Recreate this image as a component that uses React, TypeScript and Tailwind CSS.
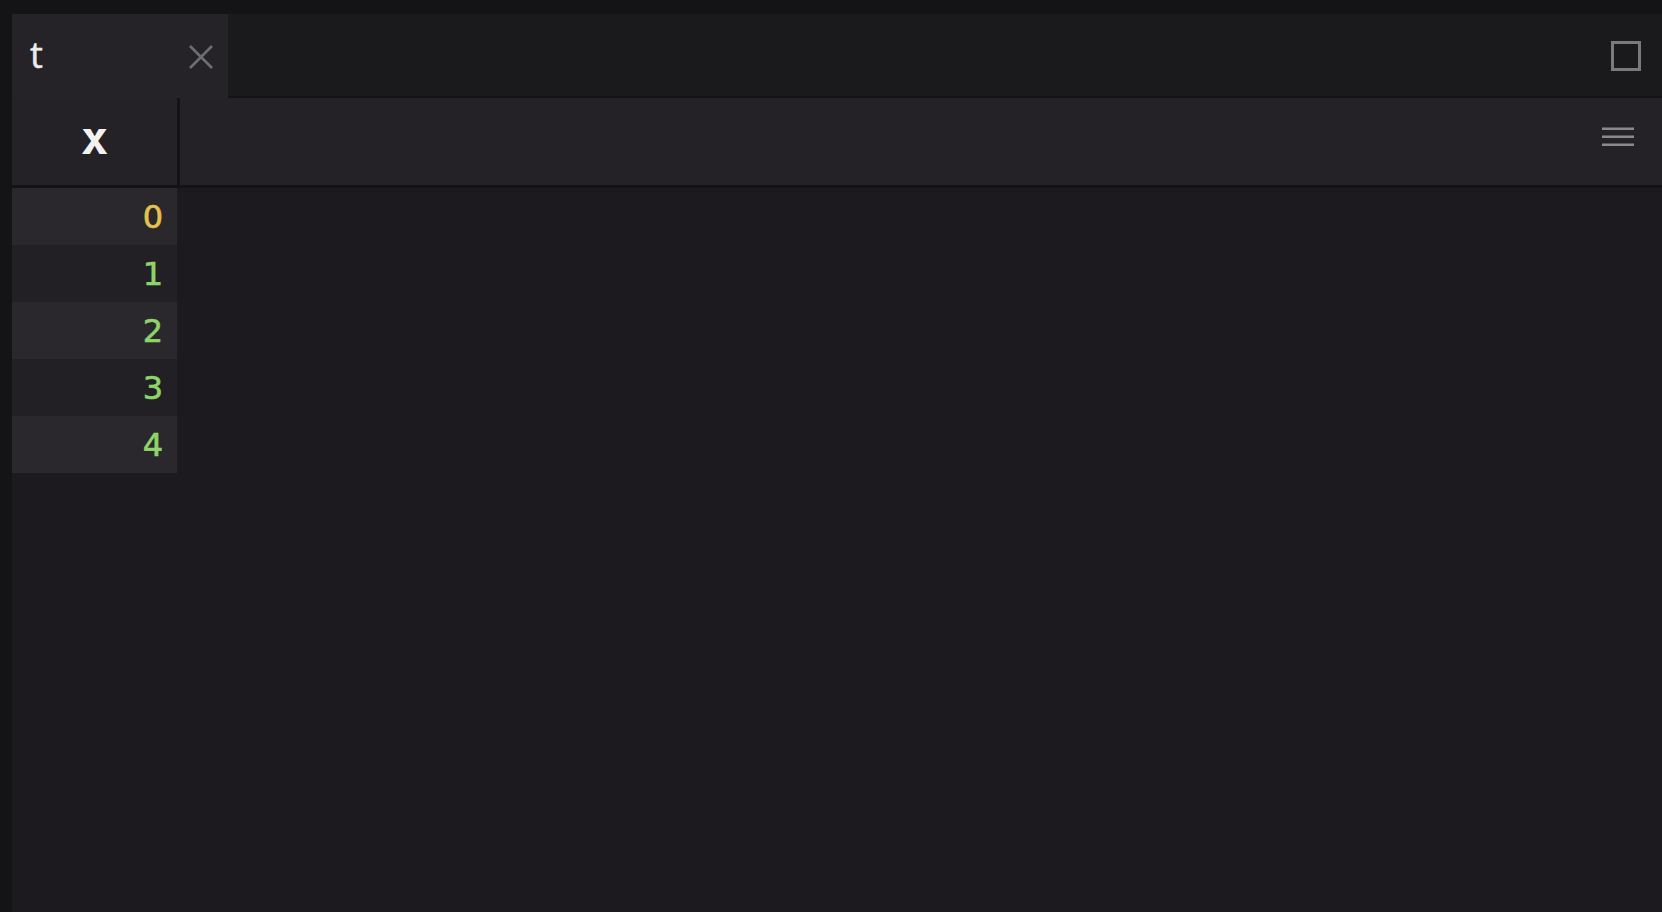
import React from "react";

const rows = [0, 1, 2, 3, 4];

export default function App() {
  return (
    <div className="w-[1662px] h-[912px] bg-[#141316] pl-[12px] pt-[14px] flex flex-col overflow-hidden">
      {/* tab bar */}
      <div className="h-[84px] flex bg-[#1a191c]">
        <div className="w-[216px] h-full bg-[#252327] flex items-center justify-between pl-[18px] pr-[14px]">
          <span
            className="text-[36px] leading-none text-[#ececec] -mt-[2px] [-webkit-text-stroke:0.5px]"
            style={{ fontFamily: '"Open Sans", "Noto Sans", sans-serif' }}
          >
            t
          </span>
          <svg width="26" height="26" viewBox="0 0 26 26" className="mt-[1px]">
            <path d="M2 2 L24 24 M24 2 L2 24" stroke="#6e6e70" strokeWidth="2.6" />
          </svg>
        </div>
        <div className="flex-1 h-full border-b-[2px] border-[#131215] flex items-center justify-end pr-[21px]">
          <div className="w-[30px] h-[30px] border-[3px] border-[#7a7a7c] mt-[2px]" />
        </div>
      </div>

      {/* header row */}
      <div className="h-[90px] flex bg-[#242226] border-b-[3px] border-[#131215]">
        <div className="w-[165px] h-full flex items-center justify-center">
          <span
            className="text-[46px] leading-none font-bold text-[#f2f2f2] -mt-[8px]"
            style={{ fontFamily: '"DejaVu Sans Mono", monospace' }}
          >
            x
          </span>
        </div>
        <div className="w-[3px] h-full bg-[#131215]" />
        <div className="flex-1 h-full" />
        <div className="w-[90px] h-full flex items-center justify-end pr-[28px]">
          <svg width="32" height="20" viewBox="0 0 32 20" className="-mt-[9px]">
            <rect x="0" y="0.5" width="32" height="2.5" fill="#8a8a8c" />
            <rect x="0" y="8.5" width="32" height="2.5" fill="#8a8a8c" />
            <rect x="0" y="16.5" width="32" height="2.5" fill="#8a8a8c" />
          </svg>
        </div>
      </div>

      {/* body */}
      <div className="flex-1 bg-[#1c1a1e]">
        <div className="w-[165px] flex flex-col">
          {rows.map((r) => (
            <div
              key={r}
              className={
                "h-[57px] flex items-center justify-end pr-[14px] " +
                (r % 2 === 0 ? "bg-[#2a282c]" : "bg-[#222024]")
              }
            >
              <span
                className={
                  "text-[32px] leading-none [-webkit-text-stroke:0.6px] " +
                  (r === 0 ? "text-[#e6c24c]" : "text-[#8fd46a]")
                }
                style={{ fontFamily: '"DejaVu Sans", sans-serif' }}
              >
                {r}
              </span>
            </div>
          ))}
        </div>
      </div>
    </div>
  );
}
